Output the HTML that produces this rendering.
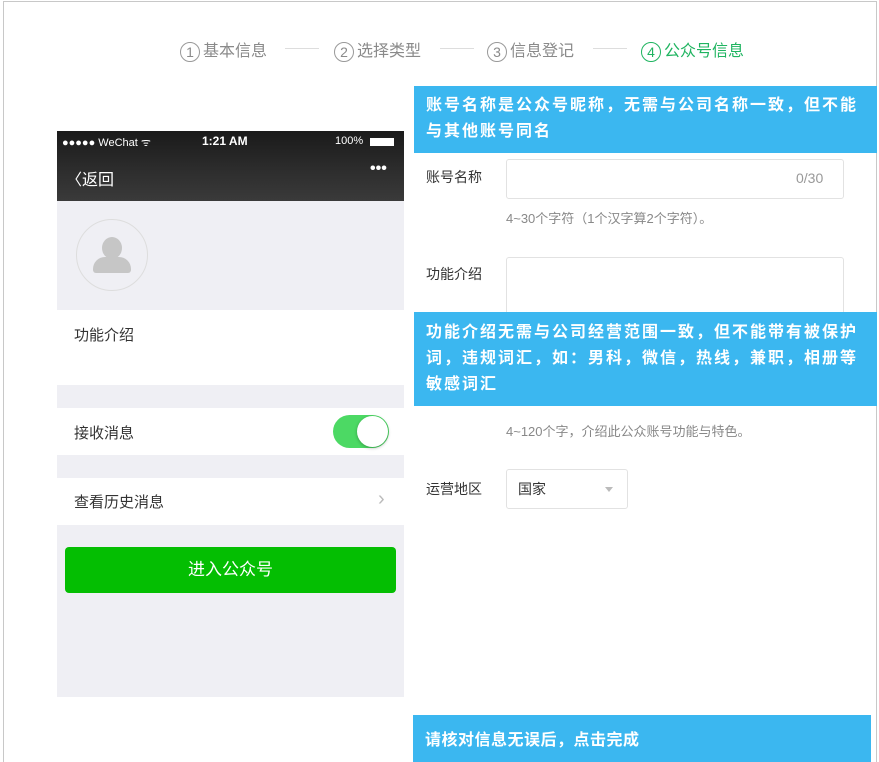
<!DOCTYPE html>
<html><head><meta charset="utf-8"><style>
*{margin:0;padding:0;box-sizing:border-box}
html,body{width:879px;height:762px;overflow:hidden}
body{background:#fff;font-family:"Liberation Sans","Noto Sans CJK SC",sans-serif;position:relative}
.a{position:absolute}
.frame{left:3px;top:1px;width:874px;height:761px;border:1px solid #c8c8c8;border-bottom:none}
.step{top:37px;font-size:16px;color:#8a8a8a;white-space:nowrap}
.c{display:inline-block;width:20px;height:20px;border:1px solid #999;border-radius:50%;font-size:14px;line-height:18px;text-align:center;margin-right:3px;vertical-align:-1px}
.dash{top:48px;height:1px;width:34px;background:#ddd}
.blue{background:#3bb7f0;color:#fff;font-size:16px;font-weight:bold;line-height:26px;white-space:nowrap;letter-spacing:2px}
.lbl{font-size:14px;color:#333}
.hint{font-size:13px;color:#888}
.box{border:1px solid #e2e2e2;border-radius:3px;background:#fff}
</style></head><body>
<div class="a frame"></div>
<div class="a step" style="left:180px"><span class="c">1</span>基本信息</div>
<div class="a dash" style="left:285px"></div>
<div class="a step" style="left:334px"><span class="c">2</span>选择类型</div>
<div class="a dash" style="left:440px"></div>
<div class="a step" style="left:487px"><span class="c">3</span>信息登记</div>
<div class="a dash" style="left:593px"></div>
<div class="a step" style="left:641px;color:#1fb460"><span class="c" style="border-color:#1fb460">4</span>公众号信息</div>

<!-- phone -->
<div class="a" style="left:57px;top:131px;width:347px;height:566px;background:#efeff4"></div>
<div class="a" style="left:57px;top:131px;width:347px;height:70px;background:linear-gradient(#1a1a1a,#2e2e2e 60%,#3a3a3a);color:#fff"></div>
<div class="a" style="left:62px;top:135px;font-size:11px;color:#fff">●●●●● WeChat ᯤ</div>
<div class="a" style="left:202px;top:134px;font-size:12px;color:#fff;font-weight:bold">1:21 AM</div>
<div class="a" style="left:335px;top:135px;font-size:11px;color:#fff">100%</div>
<div class="a" style="left:370px;top:138px;width:24px;height:8px;background:#fff"></div>
<div class="a" style="left:66px;top:166px;font-size:16px;color:#fff">〈返回</div>
<div class="a" style="left:370px;top:160px;font-size:16px;color:#fff;font-weight:bold">•••</div>
<div class="a" style="left:76px;top:219px;width:72px;height:72px;border-radius:50%;border:1px solid #ddd;background:#efeff4"></div>
<div class="a" style="left:102px;top:237px;width:20px;height:22px;border-radius:50%;background:#c6c6c6"></div>
<div class="a" style="left:93px;top:257px;width:38px;height:16px;border-radius:12px 12px 3px 3px;background:#c6c6c6"></div>
<div class="a" style="left:57px;top:310px;width:347px;height:75px;background:#fff"></div>
<div class="a lbl" style="left:74px;top:324px;font-size:15px">功能介绍</div>
<div class="a" style="left:57px;top:408px;width:347px;height:47px;background:#fff"></div>
<div class="a lbl" style="left:74px;top:422px;font-size:15px">接收消息</div>
<div class="a" style="left:333px;top:415px;width:56px;height:33px;border-radius:17px;background:#4cd964"></div>
<div class="a" style="left:357px;top:416px;width:31px;height:31px;border-radius:50%;background:#fff;box-shadow:0 1px 3px rgba(0,0,0,.3)"></div>
<div class="a" style="left:57px;top:478px;width:347px;height:47px;background:#fff"></div>
<div class="a lbl" style="left:74px;top:491px;font-size:15px">查看历史消息</div>
<div class="a" style="left:378px;top:488px;font-size:20px;color:#bbb">›</div>
<div class="a" style="left:65px;top:547px;width:331px;height:46px;background:#04be02;border-radius:4px;color:#fff;font-size:17px;text-align:center;line-height:46px">进入公众号</div>

<!-- form -->
<div class="a lbl" style="left:426px;top:167px">账号名称</div>
<div class="a box" style="left:506px;top:159px;width:338px;height:40px"></div>
<div class="a hint" style="left:796px;top:170px;font-size:14px;color:#999">0/30</div>
<div class="a hint" style="left:506px;top:208px">4~30个字符（1个汉字算2个字符）。</div>
<div class="a lbl" style="left:426px;top:264px">功能介绍</div>
<div class="a box" style="left:506px;top:257px;width:338px;height:70px"></div>
<div class="a hint" style="left:506px;top:421px">4~120个字，介绍此公众账号功能与特色。</div>
<div class="a lbl" style="left:426px;top:479px">运营地区</div>
<div class="a box" style="left:506px;top:469px;width:122px;height:40px"></div>
<div class="a" style="left:518px;top:479px;font-size:14px;color:#333">国家</div>
<div class="a" style="left:605px;top:487px;border:4px solid transparent;border-top:5px solid #bbb"></div>

<div class="a blue" style="left:414px;top:86px;width:463px;height:67px;padding:7px 12px">账号名称是公众号昵称，无需与公司名称一致，但不能<br>与其他账号同名</div>
<div class="a blue" style="left:414px;top:312px;width:463px;height:94px;padding:8px 12px">功能介绍无需与公司经营范围一致，但不能带有被保护<br>词，违规词汇，如：男科，微信，热线，兼职，相册等<br>敏感词汇</div>
<div class="a blue" style="left:413px;top:715px;width:458px;height:47px;padding:13px 12px;letter-spacing:0.5px">请核对信息无误后，点击完成</div>
</body></html>
